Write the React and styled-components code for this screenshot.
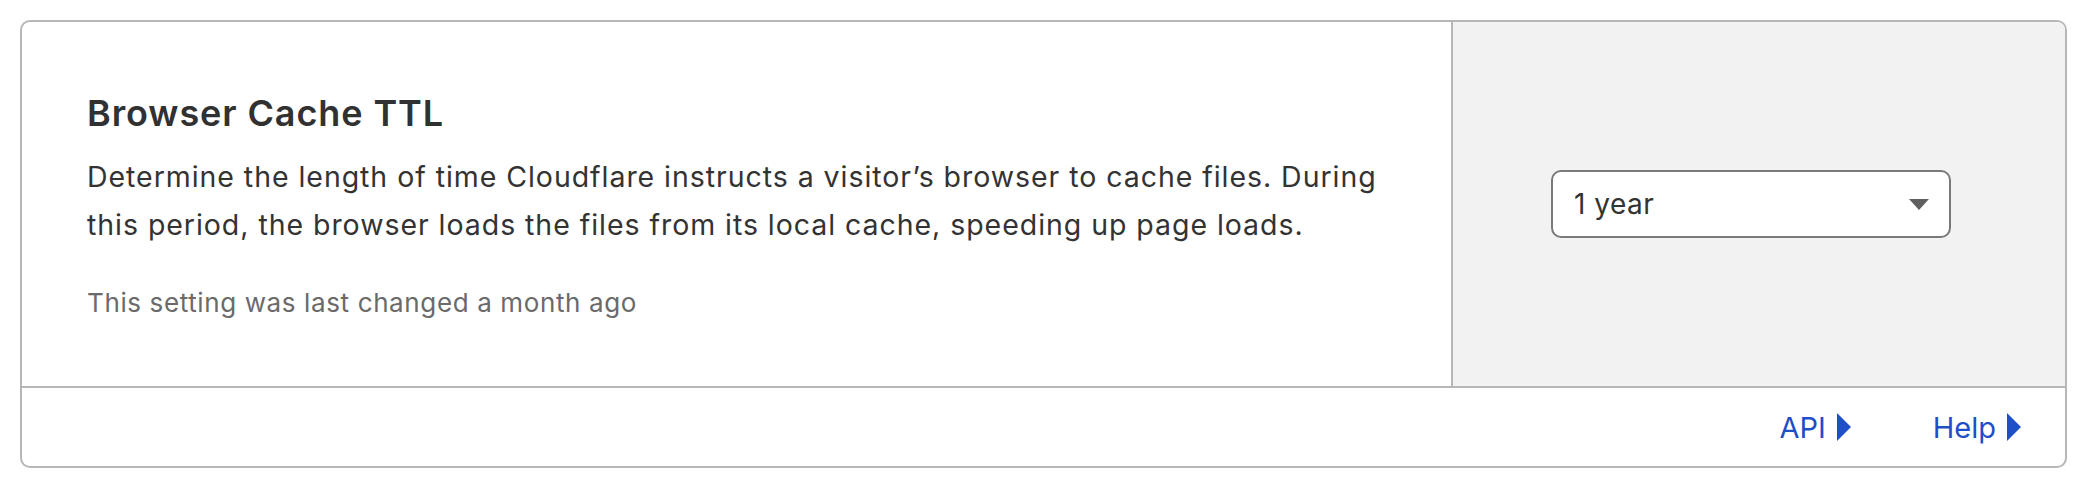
import React from 'react'
import styled, { createGlobalStyle } from 'styled-components'

const Global = createGlobalStyle`
  body {
    margin: 0;
    background: #ffffff;
    font-family: Inter, "Noto Sans", "Liberation Sans", sans-serif;
    color: #333333;
  }
`

const Page = styled.div`
  padding: 20px 27px 0 20px;
`

const Card = styled.section`
  border: 2px solid #b7b7b7;
  border-radius: 10px;
  overflow: hidden;
  background: #ffffff;
`

const Body = styled.div`
  display: grid;
  grid-template-columns: 1431px 1fr;
  height: 364px;
  border-bottom: 2px solid #b7b7b7;
`

const Info = styled.div`
  padding: 69px 30px 0 65px;
  border-right: 2px solid #b7b7b7;
`

const Title = styled.h3`
  margin: 0 0 18px;
  font-size: 36px;
  line-height: 44px;
  font-weight: 600;
  color: #313131;
  letter-spacing: 0.9px;
`

const Desc = styled.p`
  margin: 0 0 36px;
  font-size: 28.5px;
  line-height: 48px;
  letter-spacing: 0.95px;
  color: #333333;
`

const Meta = styled.div`
  font-size: 26px;
  line-height: 36px;
  letter-spacing: 0.62px;
  color: #6a6a6a;
`

const Control = styled.div`
  background: #f2f2f2;
  display: flex;
  align-items: center;
  justify-content: center;
  padding-right: 16px;
`

const Select = styled.div`
  width: 400px;
  height: 68px;
  box-sizing: border-box;
  border: 2px solid #7a7a7a;
  border-radius: 10px;
  background: #ffffff;
  display: flex;
  align-items: center;
  justify-content: space-between;
  padding: 0 20px 0 21px;
  font-size: 28px;
  letter-spacing: 0.5px;
  color: #333333;
`

const Footer = styled.div`
  height: 78px;
  display: flex;
  align-items: center;
  justify-content: flex-end;
  gap: 82px;
  padding-right: 44px;
`

const Link = styled.a`
  display: flex;
  align-items: center;
  gap: 11px;
  font-size: 29px;
  color: #1f4fc6;
  text-decoration: none;
`

const Caret = ({ w, h, color, dir }) =>
  dir === 'down' ? (
    <svg width={w} height={h} viewBox="0 0 20 11">
      <path d="M0 0 H20 L10 11 Z" fill={color} />
    </svg>
  ) : (
    <svg width={w} height={h} viewBox="0 0 14 28">
      <path d="M0 0 L14 14 L0 28 Z" fill={color} />
    </svg>
  )

export default function App() {
  return (
    <>
      <Global />
      <Page>
        <Card>
          <Body>
            <Info>
              <Title>Browser Cache TTL</Title>
              <Desc>
                Determine the length of time Cloudflare instructs a visitor’s browser to cache files. During
                this period, the browser loads the files from its local cache, speeding up page loads.
              </Desc>
              <Meta>This setting was last changed a month ago</Meta>
            </Info>
            <Control>
              <Select>
                <span>1 year</span>
                <Caret w={20} h={11} color="#5f5f5f" dir="down" />
              </Select>
            </Control>
          </Body>
          <Footer>
            <Link href="#api">
              API
              <Caret w={14} h={28} color="#1f4fc6" />
            </Link>
            <Link href="#help">
              Help
              <Caret w={14} h={28} color="#1f4fc6" />
            </Link>
          </Footer>
        </Card>
      </Page>
    </>
  )
}
